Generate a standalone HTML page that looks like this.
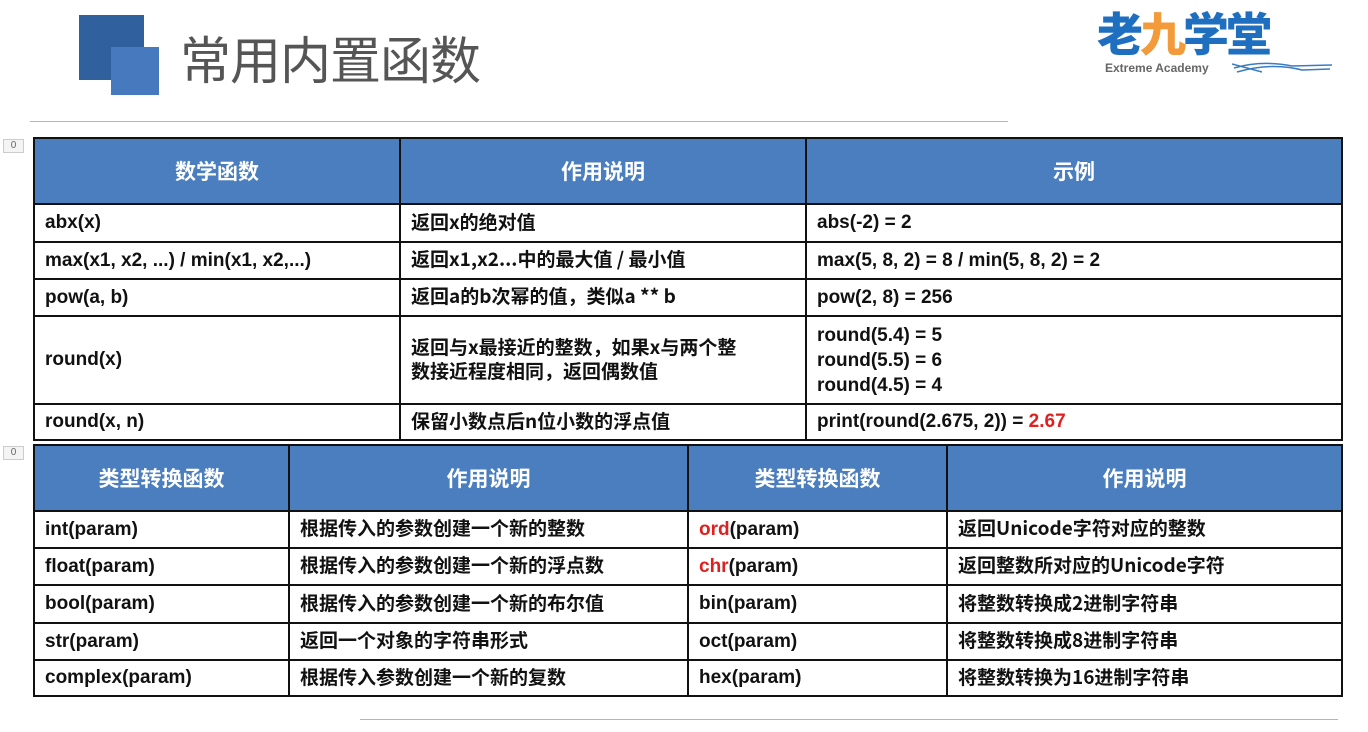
<!DOCTYPE html>
<html><head><meta charset="utf-8"><style>
*{margin:0;padding:0;box-sizing:border-box}
body{width:1368px;height:732px;background:#fff;position:relative;overflow:hidden;font-family:"Liberation Sans","Noto Sans CJK SC",sans-serif}
.sq1{position:absolute;left:79px;top:15px;width:65px;height:65px;background:#30609e}
.sq2{position:absolute;left:111px;top:47px;width:48px;height:48px;background:#4679be}
.title{position:absolute;left:180px;top:27px;font-size:51px;color:#555;font-family:"Noto Sans CJK SC",sans-serif;font-weight:400;letter-spacing:-1px;line-height:60px}
.logo{position:absolute;left:1097px;top:6px;font-size:46px;font-weight:900;color:#1f6fc0;font-family:"Noto Sans CJK SC",sans-serif;letter-spacing:-3px;line-height:52px}
.logo span{color:#f39a3a}
.sub{position:absolute;left:1105px;top:61px;font-size:12px;font-weight:bold;color:#666}
.wave{position:absolute;left:1232px;top:60px}
.hr1{position:absolute;left:30px;top:121px;width:978px;height:1px;background:#a8b8cc}
.hr2{position:absolute;left:360px;top:719px;width:978px;height:1px;background:#a8b8cc}
.tag{position:absolute;left:3px;width:21px;height:14px;border:1px solid #ccc;background:#f4f4f4;font-size:10px;color:#666;text-align:center;line-height:12px}
table{position:absolute;border-collapse:collapse;table-layout:fixed;font-size:19px;font-weight:bold;color:#111}
td,th{border:2px solid #111;padding:0 10px;white-space:nowrap;overflow:hidden;vertical-align:middle;line-height:24px}
th{background:#4a7ebf;color:#fff;font-size:21px;text-align:center;font-family:"Noto Sans CJK SC",sans-serif;font-weight:bold;padding-bottom:0}
td{font-family:"Liberation Sans","Noto Sans CJK SC",sans-serif}
td.c{font-family:"Noto Sans CJK SC",sans-serif;font-size:19px;padding-bottom:3px}
.r{color:#e02020}
</style></head><body>
<div class="sq1"></div><div class="sq2"></div>
<div class="title">常用内置函数</div>
<div class="logo">老<span>九</span>学堂</div>
<div class="sub">Extreme Academy</div>
<svg class="wave" width="105" height="16"><path d="M2 8 Q30 0 60 6 L100 5 M5 12 Q40 2 70 10 L98 9 M0 4 L30 12" stroke="#3a7cc4" stroke-width="1.5" fill="none"/></svg>
<div class="hr1"></div><div class="hr2"></div>
<div class="tag" style="top:139px">0</div>
<div class="tag" style="top:446px">0</div>
<table style="left:33px;top:137px;width:1308px">
<colgroup><col style="width:366px"><col style="width:406px"><col style="width:536px"></colgroup>
<tr style="height:66px"><th>数学函数</th><th>作用说明</th><th>示例</th></tr>
<tr style="height:38px"><td>abx(x)</td><td class="c">返回x的绝对值</td><td>abs(-2) = 2</td></tr>
<tr style="height:37px"><td>max(x1, x2, ...) / min(x1, x2,...)</td><td class="c">返回x1,x2...中的最大值 / 最小值</td><td>max(5, 8, 2) = 8 / min(5, 8, 2) = 2</td></tr>
<tr style="height:37px"><td>pow(a, b)</td><td class="c">返回a的b次幂的值，类似a ** b</td><td>pow(2, 8) = 256</td></tr>
<tr style="height:88px"><td>round(x)</td><td class="c">返回与x最接近的整数，如果x与两个整<br>数接近程度相同，返回偶数值</td><td style="line-height:25px">round(5.4) = 5<br>round(5.5) = 6<br>round(4.5) = 4</td></tr>
<tr style="height:36px"><td>round(x, n)</td><td class="c">保留小数点后n位小数的浮点值</td><td>print(round(2.675, 2)) = <span class="r">2.67</span></td></tr>
</table>
<table style="left:33px;top:444px;width:1308px">
<colgroup><col style="width:255px"><col style="width:399px"><col style="width:259px"><col style="width:395px"></colgroup>
<tr style="height:66px"><th>类型转换函数</th><th>作用说明</th><th>类型转换函数</th><th>作用说明</th></tr>
<tr style="height:37px"><td>int(param)</td><td class="c">根据传入的参数创建一个新的整数</td><td><span class="r">ord</span>(param)</td><td class="c">返回Unicode字符对应的整数</td></tr>
<tr style="height:37px"><td>float(param)</td><td class="c">根据传入的参数创建一个新的浮点数</td><td><span class="r">chr</span>(param)</td><td class="c">返回整数所对应的Unicode字符</td></tr>
<tr style="height:38px"><td>bool(param)</td><td class="c">根据传入的参数创建一个新的布尔值</td><td>bin(param)</td><td class="c">将整数转换成2进制字符串</td></tr>
<tr style="height:37px"><td>str(param)</td><td class="c">返回一个对象的字符串形式</td><td>oct(param)</td><td class="c">将整数转换成8进制字符串</td></tr>
<tr style="height:36px"><td>complex(param)</td><td class="c">根据传入参数创建一个新的复数</td><td>hex(param)</td><td class="c">将整数转换为16进制字符串</td></tr>
</table>
</body></html>
